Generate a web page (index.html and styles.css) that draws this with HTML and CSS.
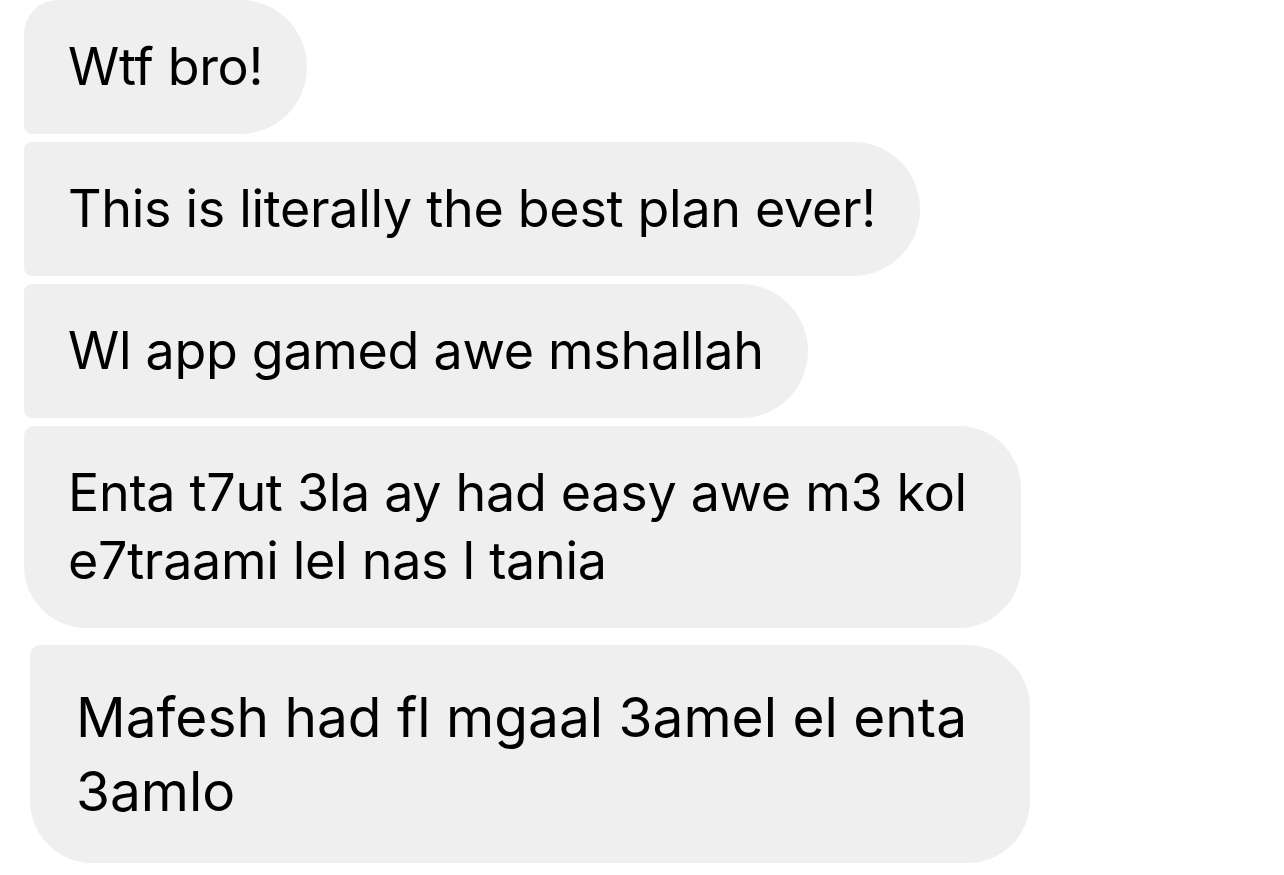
FILE: index.html
```html
<!DOCTYPE html>
<html lang="en">
<head>
    <meta charset="UTF-8">
    <meta name="viewport" content="width=device-width, initial-scale=1.0">
    <title>Messages</title>
    <link rel="stylesheet" href="styles.css">
</head>
<body>
    <main class="thread">
        <div class="bubble first">Wtf bro!</div>
        <div class="bubble">This is literally the best plan ever!</div>
        <div class="bubble">Wl app gamed awe mshallah</div>
        <div class="bubble last">Enta t7ut 3la ay had easy awe m3 kol e7traami lel nas l tania</div>

        <!-- second screenshot, pasted slightly offset -->
        <div class="bubble last pasted">Mafesh had fl mgaal 3amel el enta 3amlo</div>
    </main>
</body>
</html>
```

FILE: styles.css
```css
* {
    margin: 0;
    padding: 0;
    box-sizing: border-box;
}

body {
    background-color: #ffffff;
    color: #000000;
    font-family: Inter, 'Liberation Sans', Arial, sans-serif;
    font-variant-ligatures: none;
    font-feature-settings: "liga" 0, "calt" 0;
    overflow: hidden;
}

.thread {
    display: flex;
    flex-direction: column;
    align-items: flex-start;
    gap: 8px;
    padding-left: 24px;
}

.bubble {
    background-color: #efefef;
    font-size: 52px;
    line-height: 68px;
    letter-spacing: -0.3px;
    padding: 33px 44px;
    border-radius: 8px 67px 67px 8px;
    max-width: 997px;
}

.bubble.first {
    border-top-left-radius: 34px;
}

.bubble.last {
    width: 997px;
    padding-right: 30px;
    border-radius: 10px 62px 62px 62px;
}

.bubble.pasted {
    width: 1000px;
    max-width: 1000px;
    margin-top: 9px;
    margin-left: 6px;
    font-size: 55px;
    line-height: 74px;
    letter-spacing: 0;
    padding: 35px 30px 35px 46px;
}
```
